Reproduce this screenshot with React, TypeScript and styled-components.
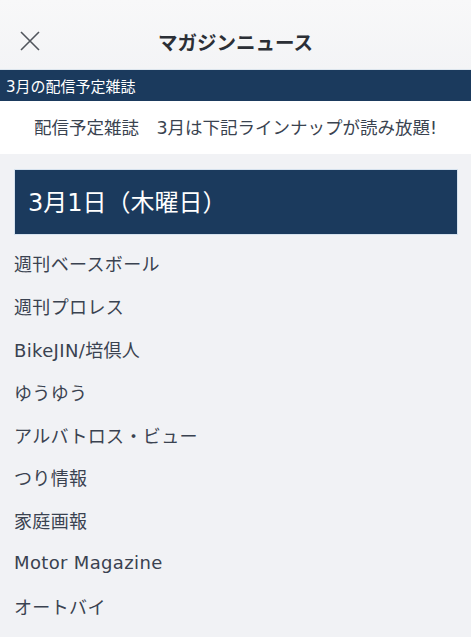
import React from "react";
import styled, { createGlobalStyle } from "styled-components";

const Global = createGlobalStyle`
  html, body { margin: 0; padding: 0; background: #f1f2f5; }
  body { font-family: "DejaVu Sans", "Noto Sans CJK JP", sans-serif; }
`;

const Page = styled.div`
  width: 471px;
  min-height: 637px;
  background: #f1f2f5;
  overflow: hidden;
`;

const Header = styled.header`
  position: relative;
  height: 70px;
  display: flex;
  align-items: center;
  justify-content: center;
  background: linear-gradient(#f8f8f9, #f3f4f6);
  border-bottom: 1px solid #dde6ee;
  box-sizing: border-box;
`;

const Close = styled.button`
  position: absolute;
  left: 18px;
  top: 29px;
  width: 24px;
  height: 24px;
  padding: 0;
  border: 0;
  background: none;
  display: flex;
`;

const Title = styled.h1`
  margin: 0;
  font-family: "Noto Sans CJK JP", sans-serif;
  font-size: 19.5px;
  font-weight: 700;
  color: #2b2f36;
  padding-top: 13px;
`;

const SectionBar = styled.div`
  height: 31px;
  background: #1b3a5d;
  color: #ffffff;
  font-size: 15px;
  display: flex;
  align-items: center;
  padding-left: 6px;
`;

const Lead = styled.div`
  height: 53px;
  background: #ffffff;
  display: flex;
  align-items: center;
  justify-content: center;
  font-size: 17.5px;
  color: #3a4350;
  padding-bottom: 3px;
  box-sizing: border-box;
`;

const Content = styled.main`
  padding: 15px 13px 0 14px;
`;

const DateBox = styled.div`
  height: 66px;
  background: #1b3a5d;
  color: #ffffff;
  font-size: 24px;
  display: flex;
  align-items: center;
  padding-left: 13px;
  padding-bottom: 3px;
  border: 1px solid #d6e2ee;
  box-sizing: border-box;
`;

const List = styled.ul`
  list-style: none;
  margin: 0;
  padding: 7px 0 0;
`;

const Item = styled.li`
  height: 42.8px;
  display: flex;
  align-items: center;
  font-size: 18px;
  letter-spacing: 0.35px;
  color: #3a4250;
`;

const items = [
  "週刊ベースボール",
  "週刊プロレス",
  "BikeJIN/培倶人",
  "ゆうゆう",
  "アルバトロス・ビュー",
  "つり情報",
  "家庭画報",
  "Motor Magazine",
  "オートバイ",
];

export default function App() {
  return (
    <Page>
      <Global />
      <Header>
        <Close aria-label="close">
          <svg width="24" height="24" viewBox="0 0 24 24">
            <path d="M3 3 L21 21 M21 3 L3 21" stroke="#50555c" strokeWidth="1.6" fill="none" />
          </svg>
        </Close>
        <Title>マガジンニュース</Title>
      </Header>
      <SectionBar>3月の配信予定雑誌</SectionBar>
      <Lead>配信予定雑誌　3月は下記ラインナップが読み放題!</Lead>
      <Content>
        <DateBox>3月1日（木曜日）</DateBox>
        <List>
          {items.map((t) => (
            <Item key={t}>{t}</Item>
          ))}
        </List>
      </Content>
    </Page>
  );
}
